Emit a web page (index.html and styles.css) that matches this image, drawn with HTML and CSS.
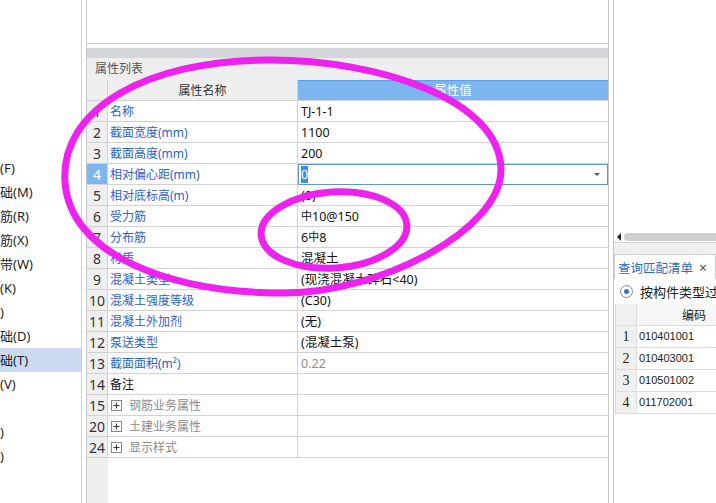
FILE: index.html
```html
<!DOCTYPE html>
<html lang="zh-CN">
<head>
<meta charset="utf-8">
<title>属性列表</title>
<link rel="stylesheet" href="styles.css">
</head>
<body>
<div class="app">
  <div class="left">
    <div class="ti">(F)</div>
    <div class="ti">础(M)</div>
    <div class="ti">筋(R)</div>
    <div class="ti">筋(X)</div>
    <div class="ti">带(W)</div>
    <div class="ti">(K)</div>
    <div class="ti">)</div>
    <div class="ti">础(D)</div>
    <div class="ti sel">础(T)</div>
    <div class="ti">(V)</div>
    <div class="ti"></div>
    <div class="ti">)</div>
    <div class="ti">)</div>
  </div>

  <div class="mid">
    <div class="topbox"></div>
    <div class="gap"></div>
    <div class="graybar"></div>
    <div class="title">属性列表</div>
    <div class="grid">
      <div class="c n hd"></div><div class="c k hd">属性名称</div><div class="c v hd">属性值</div>

      <div class="c n">1</div><div class="c k">名称</div><div class="c v">TJ-1-1</div>
      <div class="c n">2</div><div class="c k">截面宽度(mm)</div><div class="c v">1100</div>
      <div class="c n">3</div><div class="c k">截面高度(mm)</div><div class="c v">200</div>
      <div class="c n act">4</div><div class="c k">相对偏心距(mm)</div><div class="c v edit"><span class="sel0">0</span><span class="arrow"></span></div>
      <div class="c n">5</div><div class="c k">相对底标高(m)</div><div class="c v">(0)</div>
      <div class="c n">6</div><div class="c k">受力筋</div><div class="c v"><span class="bar">中</span>10@150</div>
      <div class="c n">7</div><div class="c k">分布筋</div><div class="c v">6<span class="bar">中</span>8</div>
      <div class="c n">8</div><div class="c k">材质</div><div class="c v">混凝土</div>
      <div class="c n">9</div><div class="c k">混凝土类型</div><div class="c v">(现浇混凝土碎石&lt;40)</div>
      <div class="c n">10</div><div class="c k">混凝土强度等级</div><div class="c v">(C30)</div>
      <div class="c n">11</div><div class="c k">混凝土外加剂</div><div class="c v">(无)</div>
      <div class="c n">12</div><div class="c k">泵送类型</div><div class="c v">(混凝土泵)</div>
      <div class="c n">13</div><div class="c k">截面面积(m²)</div><div class="c v dim">0.22</div>
      <div class="c n">14</div><div class="c k plain">备注</div><div class="c v"></div>
      <div class="c n">15</div><div class="c k grp"><span class="plus"><svg width="11" height="11" viewBox="0 0 11 11"><rect x="0.5" y="0.5" width="10" height="10" fill="#fff" stroke="#8a8a8a"/><path d="M2.5 5.5h6M5.5 2.5v6" stroke="#333" stroke-width="1"/></svg></span>钢筋业务属性</div><div class="c v"></div>
      <div class="c n">20</div><div class="c k grp"><span class="plus"><svg width="11" height="11" viewBox="0 0 11 11"><rect x="0.5" y="0.5" width="10" height="10" fill="#fff" stroke="#8a8a8a"/><path d="M2.5 5.5h6M5.5 2.5v6" stroke="#333" stroke-width="1"/></svg></span>土建业务属性</div><div class="c v"></div>
      <div class="c n">24</div><div class="c k grp"><span class="plus"><svg width="11" height="11" viewBox="0 0 11 11"><rect x="0.5" y="0.5" width="10" height="10" fill="#fff" stroke="#8a8a8a"/><path d="M2.5 5.5h6M5.5 2.5v6" stroke="#333" stroke-width="1"/></svg></span>显示样式</div><div class="c v"></div>
    </div>
    <div class="filler"></div>
  </div>

  <div class="right">
    <div class="rblank"></div>
    <div class="hscroll"><span class="la"></span><span class="thumb"></span></div>
    <div class="tabstrip">
      <div class="tab"><span>查询匹配清单</span><span class="x">×</span></div>
    </div>
    <div class="radio"><span class="rb"><span class="dot"></span></span><span class="rlabel">按构件类型过滤</span></div>
    <div class="rtable">
      <div class="rn"></div><div class="rc rh">编码</div>
      <div class="rn">1</div><div class="rc">010401001</div>
      <div class="rn">2</div><div class="rc">010403001</div>
      <div class="rn">3</div><div class="rc">010501002</div>
      <div class="rn">4</div><div class="rc">011702001</div>
    </div>
  </div>
</div>

<svg class="marks" width="716" height="503" viewBox="0 0 716 503">
  <path d="M65 182 C60 110 145 60 270 60 C380 60 501 100 501 170 C501 230 380 293 285 293 C170 293 70 255 65 182 Z" fill="none" stroke="#ee22ee" stroke-width="7"/>
  <ellipse cx="334" cy="230" rx="73" ry="38" transform="rotate(-4 334 230)" fill="none" stroke="#ee22ee" stroke-width="7"/>
</svg>
</body>
</html>
```

FILE: styles.css
```css
* { box-sizing: border-box; }
html, body { margin: 0; padding: 0; }
body {
  width: 716px;
  height: 503px;
  overflow: hidden;
  position: relative;
  background: #fff;
  font-family: "Noto Sans", "Noto Sans CJK SC", sans-serif;
  font-size: 12px;
  color: #222;
}
.app { display: flex; height: 503px; }

/* left tree */
.left {
  width: 82px;
  flex: none;
  border-right: 1px solid #cfcfcf;
  padding-top: 156px;
  overflow: hidden;
}
.ti {
  height: 24px;
  line-height: 24px;
  font-size: 13px;
  white-space: nowrap;
  color: #1e1e1e;
}
.ti.sel { background: #cbdaee; }

/* middle property grid */
.mid {
  width: 523px;
  flex: none;
  margin-left: 4px;
  border-left: 1px solid #c9c9c9;
  border-right: 1px solid #c9c9c9;
  display: flex;
  flex-direction: column;
}
.topbox { height: 44px; flex: none; border-bottom: 1px solid #c9c9c9; }
.gap { height: 4px; flex: none; }
.graybar { height: 10px; flex: none; background: #d4d6da; }
.title {
  height: 22px;
  flex: none;
  line-height: 21px;
  background: #eeeeef;
  padding-left: 8px;
  color: #555;
  font-size: 12px;
}
.grid {
  display: grid;
  grid-template-columns: 21px 190px 1fr;
  grid-auto-rows: 21px;
  flex: none;
}
.c {
  border-bottom: 1px solid #d2d2d2;
  border-right: 1px solid #d2d2d2;
  line-height: 21px;
  white-space: nowrap;
  overflow: hidden;
}
.n { background: #efefef; text-align: center; font-size: 14px; color: #333; }
.n.act { background: #7cb5ef; color: #fff; }
.k { color: #2b60d6; padding-left: 2px; }
.k.plain { color: #111; }
.k.grp { color: #8c8c8c; display: flex; align-items: center; }
.plus { display: inline-flex; width: 11px; height: 11px; margin-left: 1px; margin-right: 7px; }
.v { border-right: none; padding-left: 3px; font-size: 12.5px; color: #111; }
.v.dim { color: #8e8e8e; }
.hd.k { background: #efefef; text-align: center; color: #333; padding-left: 0; }
.hd.v { background: #7cb5ef; color: #fff; text-align: center; padding-left: 0; border-top: 1px solid #5e9ee4; line-height: 19px; }
.v.edit { border: 1px solid #5d95d6; position: relative; padding-left: 2px; line-height: 19px; }
.sel0 { background: #3f8ee8; color: #fff; }
.arrow {
  position: absolute;
  right: 7px;
  top: 8px;
  border-left: 3px solid transparent;
  border-right: 3px solid transparent;
  border-top: 3px solid #555;
}
.bar { font-size: 11px; position: relative; top: -1px; }
.filler { flex: 1; background: linear-gradient(to right, #efefef 0, #efefef 21px, #fff 21px); }

/* right panel */
.right {
  width: 103px;
  flex: none;
  margin-left: 4px;
  border-left: 1px solid #c6c6c6;
  overflow: hidden;
  display: flex;
  flex-direction: column;
}
.rblank { height: 232px; flex: none; }
.hscroll { height: 10px; flex: none; display: flex; align-items: center; padding-left: 3px; gap: 3px; }
.la { border-top: 4px solid transparent; border-bottom: 4px solid transparent; border-right: 4px solid #222; }
.thumb { flex: 1; height: 8px; background: #cfcfcf; border-radius: 4px 0 0 4px; }
.tabstrip { height: 37px; flex: none; border-top: 1px solid #d0d0d0; background: #f0f0f0; padding-top: 11px; }
.tab {
  height: 25px;
  background: #fff;
  border: 1px solid #cdcdcd;
  border-bottom: none;
  display: flex;
  align-items: center;
  padding-left: 3px;
  color: #2c6bc9;
  font-size: 12.5px;
  white-space: nowrap;
}
.tab .x { color: #555; margin-left: 6px; font-size: 14px; }
.radio { height: 25px; flex: none; display: flex; align-items: center; padding-left: 6px; gap: 7px; white-space: nowrap; font-size: 13px; color: #222; }
.rlabel { flex: none; }
.rb {
  width: 13px; height: 13px; flex: none;
  border: 1px solid #8a8a8a; border-radius: 50%;
  display: flex; align-items: center; justify-content: center;
  background: #fff;
}
.dot { width: 5px; height: 5px; border-radius: 50%; background: #2f74d0; }
.rtable {
  display: grid;
  grid-template-columns: 21px 112px;
  grid-auto-rows: 22px;
  margin-left: 1px;
  border-left: 1px solid #d8d8d8;
  width: 134px;
  flex: none;
}
.rn {
  background: #f0f0f0;
  text-align: center;
  font-family: "Liberation Serif", serif;
  font-size: 14px;
  line-height: 21px;
  border-bottom: 1px solid #dcdcdc;
  border-right: 1px solid #dcdcdc;
}
.rc {
  padding-left: 2px;
  font-family: "Liberation Sans", sans-serif;
  font-size: 11px;
  line-height: 21px;
  border-bottom: 1px solid #dcdcdc;
  color: #222;
}
.rc.rh { text-align: center; background: #f6f6f6; font-family: "Noto Sans CJK SC", sans-serif; font-size: 12px; }

.marks { position: absolute; left: 0; top: 0; pointer-events: none; }
```
